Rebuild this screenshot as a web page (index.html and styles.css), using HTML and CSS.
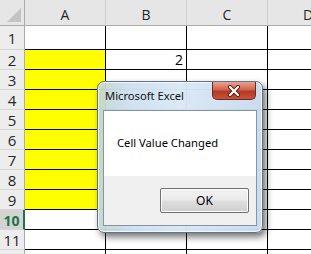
FILE: index.html
```html
<!DOCTYPE html>
<html>
<head>
<meta charset="utf-8">
<link rel="stylesheet" href="styles.css">
</head>
<body>
<div class="sheet">
  <div class="grid">
    <div class="hdr corner"><span class="tri"></span></div>
    <div class="hdr col">A</div>
    <div class="hdr col">B</div>
    <div class="hdr col">C</div>
    <div class="hdr col last">D</div>

    <div class="rh r1">1</div><div class="c r1"></div><div class="c r1"></div><div class="c r1"></div><div class="c r1"></div>
    <div class="rh">2</div><div class="c y"></div><div class="c num">2</div><div class="c"></div><div class="c"></div>
    <div class="rh">3</div><div class="c y"></div><div class="c"></div><div class="c"></div><div class="c"></div>
    <div class="rh">4</div><div class="c y"></div><div class="c"></div><div class="c"></div><div class="c"></div>
    <div class="rh">5</div><div class="c y"></div><div class="c"></div><div class="c"></div><div class="c"></div>
    <div class="rh">6</div><div class="c y"></div><div class="c"></div><div class="c"></div><div class="c"></div>
    <div class="rh">7</div><div class="c y"></div><div class="c"></div><div class="c"></div><div class="c"></div>
    <div class="rh">8</div><div class="c y"></div><div class="c"></div><div class="c"></div><div class="c"></div>
    <div class="rh">9</div><div class="c y"></div><div class="c"></div><div class="c"></div><div class="c"></div>
    <div class="rh sel">10</div><div class="c"></div><div class="c"></div><div class="c"></div><div class="c"></div>
    <div class="rh">11</div><div class="c"></div><div class="c"></div><div class="c"></div><div class="c"></div>
    <div class="rh"></div><div class="c"></div><div class="c"></div><div class="c"></div><div class="c"></div>
  </div>

  <div class="dialog">
    <div class="titlebar">
      <span class="title">Microsoft Excel</span>
      <span class="close">
        <svg width="14" height="12" viewBox="0 0 14 12">
          <path d="M3 2 L11 10 M11 2 L3 10" stroke="#5a1a12" stroke-width="4" stroke-linecap="round"/>
          <path d="M3 2 L11 10 M11 2 L3 10" stroke="#ffffff" stroke-width="2.2" stroke-linecap="round"/>
        </svg>
      </span>
    </div>
    <div class="body">
      <div class="msg">Cell Value Changed</div>
      <div class="actions">
        <button class="ok">OK</button>
      </div>
    </div>
  </div>
</div>
</body>
</html>
```
FILE: styles.css
```css
html, body {
  margin: 0;
  padding: 0;
  background: #ffffff;
  overflow: hidden;
}
.sheet {
  position: relative;
  width: 311px;
  height: 254px;
  overflow: hidden;
  font-family: "Open Sans", "Noto Sans", sans-serif;
}
.grid {
  display: grid;
  grid-template-columns: 25px 81px 81px 81px 81px;
  grid-template-rows: 26px 24px repeat(11, 20px);
}
.grid > div {
  box-sizing: border-box;
}
.hdr {
  background: #e6e6e6;
  border-bottom: 1px solid #ababab;
  border-right: 1px solid #cfcfcf;
  display: flex;
  align-items: center;
  justify-content: center;
  font-size: 14px;
  color: #262626;
  padding-top: 4px;
}
.corner {
  position: relative;
  border-right: 1px solid #ababab;
}
.tri {
  position: absolute;
  right: 3px;
  bottom: 3px;
  width: 14px;
  height: 14px;
  background: #c3c3c3;
  clip-path: polygon(100% 0, 100% 100%, 0 100%);
}
.rh {
  background: #ededed;
  border-right: 1px solid #ababab;
  border-bottom: 1px solid #d6d6d6;
  font-size: 15px;
  color: #262626;
  display: flex;
  align-items: center;
  justify-content: center;
  padding-top: 1px;
}
.rh.sel {
  background: #d3d3d3;
  color: #217346;
  font-weight: bold;
  font-size: 14px;
  border-right: 2px solid #217346;
}
.c {
  border-right: 1px solid #000;
  border-bottom: 1px solid #000;
  background: #fff;
}
.c.y {
  background: #ffff00;
}
.c.num {
  font-size: 14px;
  text-align: right;
  padding-right: 3px;
  line-height: 20px;
  color: #000;
}

.dialog {
  position: absolute;
  left: 97px;
  top: 81px;
  width: 166px;
  height: 152px;
  box-sizing: border-box;
  border: 1px solid #5f7487;
  border-radius: 7px;
  background: linear-gradient(90deg, rgba(196,214,208,0.95) 0%, rgba(206,224,241,0.97) 20%, rgba(218,232,246,0.97) 50%, rgba(200,219,238,0.97) 100%);
  box-shadow: 3px 4px 7px rgba(0,0,0,0.55), inset 0 0 0 1px rgba(255,255,255,0.7);
  display: flex;
  flex-direction: column;
  padding: 0 5px 6px 5px;
}
.titlebar {
  height: 28px;
  display: flex;
  align-items: flex-start;
  justify-content: space-between;
}
.title {
  font-family: "Noto Sans", "Open Sans", sans-serif;
  font-size: 11.2px;
  color: #111;
  margin-top: 6px;
  margin-left: 2px;
}
.close {
  width: 44px;
  height: 18px;
  margin-right: 1px;
  box-sizing: border-box;
  border: 1px solid #6e2a22;
  border-top: none;
  border-radius: 0 0 5px 5px;
  background: linear-gradient(#e8a493 0%, #d1634c 45%, #b43a22 55%, #c8533a 100%);
  display: flex;
  align-items: center;
  justify-content: center;
}
.body {
  flex: 1;
  border: 1px solid #8194a9;
  background: #f0f0f0;
  display: flex;
  flex-direction: column;
}
.msg {
  background: #fff;
  height: 65px;
  box-sizing: border-box;
  font-family: "Noto Sans", "Open Sans", sans-serif;
  font-size: 11.2px;
  color: #000;
  padding: 24px 0 0 13px;
}
.actions {
  flex: 1;
  display: flex;
  justify-content: flex-end;
  align-items: flex-start;
  padding: 12px 7px 0 0;
}
.ok {
  width: 89px;
  height: 25px;
  box-sizing: border-box;
  border: 1px solid #707070;
  border-radius: 2px;
  background: linear-gradient(#f2f2f2 0%, #ebebeb 45%, #dddddd 55%, #cfcfcf 100%);
  box-shadow: inset 0 0 0 1px #fcfcfc;
  font-family: "Noto Sans", "Open Sans", sans-serif;
  font-size: 12px;
  color: #000;
  padding: 0;
}
```
